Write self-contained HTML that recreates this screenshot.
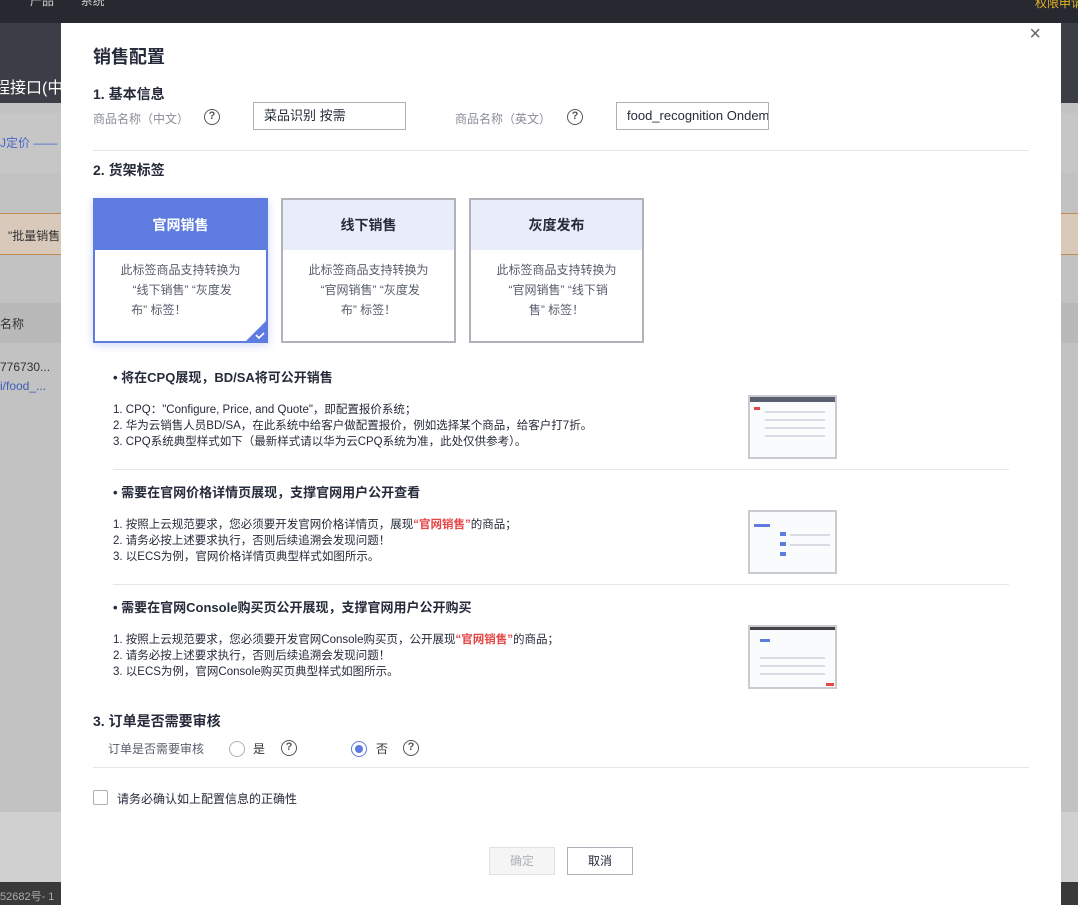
<!DOCTYPE html>
<html><head><meta charset="utf-8"><style>
*{box-sizing:border-box;margin:0;padding:0}
body{width:1078px;height:905px;overflow:hidden;position:relative;background:#c2c2c3;font-family:"Liberation Sans","Noto Sans CJK SC",sans-serif;color:#333}
.abs{position:absolute;white-space:nowrap}
.modal{position:absolute;left:61px;top:23px;width:1000px;height:882px;background:#fff}
.h1{position:absolute;left:32px;top:20px;font-size:18px;font-weight:bold;color:#252b3a}
.sec{position:absolute;left:32px;font-size:14px;font-weight:bold;color:#252b3a}
.lbl{position:absolute;font-size:12px;color:#8a8e99}
.q{position:absolute;width:16px;height:16px;border:1.5px solid #555;border-radius:50%;font-size:11px;line-height:13px;text-align:center;color:#555;font-weight:bold}
.inp{position:absolute;height:28px;border:1px solid #adb0b8;font-size:13px;line-height:26px;padding-left:10px;color:#252b3a;overflow:hidden;white-space:nowrap}
.hr{position:absolute;left:32px;width:936px;height:1px;background:#e6e6e6}
.card{position:absolute;top:175px;width:175px;height:145px;border:2px solid #b0b3ba;background:#fff}
.card .t{height:50px;background:#e9edfa;text-align:center;line-height:50px;font-size:14px;font-weight:bold;color:#252b3a}
.card .d{padding:10px 0;font-size:12px;line-height:20px;color:#575d6c;text-align:center;white-space:nowrap}
.card.on{border-color:#5e7ce0;box-shadow:0 2px 8px rgba(94,124,224,.3)}
.card.on .t{background:#5e7ce0;color:#fff}
.bt{position:absolute;left:52px;font-size:13px;font-weight:bold;color:#252b3a}
.ln{position:absolute;left:52px;font-size:11.5px;line-height:16px;color:#252b3a;white-space:nowrap}
.red{color:#e54545;font-weight:bold}
.thumb{position:absolute;left:687px;width:89px;height:64px;border:2px solid #c9cbd0;background:#fafbfd}
.thumb i{position:absolute;display:block;background:#d8dbe3;height:2px}
</style></head><body>
<div class="abs" style="left:0;top:0;width:1078px;height:23px;background:#262930"></div>
<div class="abs" style="left:30px;top:-8px;font-size:12px;color:#ccc">产品 &nbsp;&nbsp;&nbsp;&nbsp;&nbsp;&nbsp;&nbsp;系统</div>
<div class="abs" style="left:1035px;top:-6px;font-size:12px;color:#e6b422">权限申请</div>
<div class="abs" style="left:0;top:23px;width:1078px;height:80px;background:#3b3e46"></div>
<div class="abs" style="left:-6px;top:74px;font-size:16px;color:#fff">程接口(中</div>
<div class="abs" style="left:0;top:113px;width:1078px;height:60px;background:#c6c6c7"></div>
<div class="abs" style="left:0;top:134px;font-size:12px;color:#4a67c8">J定价 ——</div>
<div class="abs" style="left:0;top:213px;width:1078px;height:42px;background:#d8c9bb;border-top:1px solid #c08a50;border-bottom:1px solid #c08a50"></div>
<div class="abs" style="left:8px;top:227px;font-size:12px;color:#333">"批量销售</div>
<div class="abs" style="left:0;top:303px;width:1078px;height:40px;background:#b9b9ba"></div>
<div class="abs" style="left:0;top:315px;font-size:12px;color:#333">名称</div>
<div class="abs" style="left:0;top:360px;font-size:12px;color:#333">776730...</div>
<div class="abs" style="left:0;top:379px;font-size:12px;color:#3c5bb5">i/food_...</div>
<div class="abs" style="left:0;top:812px;width:1078px;height:70px;background:#d0d0d1"></div>
<div class="abs" style="left:0;top:882px;width:1078px;height:23px;background:#3a3a3a"></div>
<div class="abs" style="left:0;top:888px;font-size:11px;color:#aaa">52682号- 1</div>

<div class="modal">
<div class="abs" style="right:20px;top:0px;font-size:20px;color:#666">×</div>
<div class="h1">销售配置</div>
<div class="sec" style="top:61px">1. 基本信息</div>
<div class="lbl" style="left:32px;top:87px">商品名称（中文）</div>
<div class="q" style="left:143px;top:86px">?</div>
<div class="inp" style="left:192px;top:79px;width:153px">菜品识别 按需</div>
<div class="lbl" style="left:394px;top:87px">商品名称（英文）</div>
<div class="q" style="left:506px;top:86px">?</div>
<div class="inp" style="left:555px;top:79px;width:153px">food_recognition Ondemand</div>
<div class="hr" style="top:127px"></div>
<div class="sec" style="top:137px">2. 货架标签</div>
<div class="card on" style="left:32px"><div class="t">官网销售</div><div class="d">此标签商品支持转换为<br>&nbsp;“线下销售” “灰度发<br>布” 标签！&nbsp;&nbsp;&nbsp;&nbsp;&nbsp;&nbsp;&nbsp;&nbsp;&nbsp;&nbsp;&nbsp;&nbsp;&nbsp;</div>
<svg class="abs" style="right:-2px;bottom:-2px" width="24" height="24"><path d="M24 0V24H0Z" fill="#5e7ce0"/><path d="M12 16l3 3 5-5" stroke="#fff" stroke-width="1.6" fill="none"/></svg></div>
<div class="card" style="left:220px"><div class="t">线下销售</div><div class="d">此标签商品支持转换为<br>&nbsp;“官网销售” “灰度发<br>布” 标签！</div></div>
<div class="card" style="left:408px"><div class="t">灰度发布</div><div class="d">此标签商品支持转换为<br>&nbsp;“官网销售” “线下销<br>售” 标签！</div></div>

<div class="bt" style="top:344px">• 将在CPQ展现，BD/SA将可公开销售</div>
<div class="ln" style="top:379px">1. CPQ："Configure, Price, and Quote"，即配置报价系统；<br>2. 华为云销售人员BD/SA，在此系统中给客户做配置报价，例如选择某个商品，给客户打7折。<br>3. CPQ系统典型样式如下（最新样式请以华为云CPQ系统为准，此处仅供参考）。</div>
<div class="thumb" style="top:372px"><i style="left:0;top:0;width:85px;height:5px;background:#5a6070"></i><i style="left:15px;top:14px;width:60px"></i><i style="left:15px;top:22px;width:60px"></i><i style="left:15px;top:30px;width:60px"></i><i style="left:15px;top:38px;width:60px"></i><i style="left:4px;top:10px;width:6px;height:3px;background:#e54545"></i></div>
<div class="hr" style="top:446px;left:52px;width:896px"></div>
<div class="bt" style="top:459px">• 需要在官网价格详情页展现，支撑官网用户公开查看</div>
<div class="ln" style="top:494px">1. 按照上云规范要求，您必须要开发官网价格详情页，展现<span class="red">“官网销售”</span>的商品；<br>2. 请务必按上述要求执行，否则后续追溯会发现问题！<br>3. 以ECS为例，官网价格详情页典型样式如图所示。</div>
<div class="thumb" style="top:487px"><i style="left:4px;top:12px;width:16px;height:3px;background:#5e7ce0"></i><i style="left:30px;top:20px;width:6px;height:4px;background:#5e7ce0"></i><i style="left:30px;top:30px;width:6px;height:4px;background:#5e7ce0"></i><i style="left:30px;top:40px;width:6px;height:4px;background:#5e7ce0"></i><i style="left:40px;top:22px;width:40px"></i><i style="left:40px;top:32px;width:40px"></i></div>
<div class="hr" style="top:561px;left:52px;width:896px"></div>
<div class="bt" style="top:574px">• 需要在官网Console购买页公开展现，支撑官网用户公开购买</div>
<div class="ln" style="top:609px">1. 按照上云规范要求，您必须要开发官网Console购买页，公开展现<span class="red">“官网销售”</span>的商品；<br>2. 请务必按上述要求执行，否则后续追溯会发现问题！<br>3. 以ECS为例，官网Console购买页典型样式如图所示。</div>
<div class="thumb" style="top:602px"><i style="left:0;top:0;width:85px;height:3px;background:#444"></i><i style="left:10px;top:12px;width:10px;height:3px;background:#5e7ce0"></i><i style="left:10px;top:30px;width:65px"></i><i style="left:10px;top:38px;width:65px"></i><i style="left:10px;top:46px;width:65px"></i><i style="left:76px;top:56px;width:8px;height:3px;background:#e54545"></i></div>

<div class="sec" style="top:688px">3. 订单是否需要审核</div>
<div class="abs" style="left:47px;top:717px;font-size:12px;color:#575d6c">订单是否需要审核</div>
<div class="abs" style="left:168px;top:718px;width:16px;height:16px;border:1px solid #adb0b8;border-radius:50%"></div>
<div class="abs" style="left:192px;top:717px;font-size:12px">是</div>
<div class="q" style="left:220px;top:717px">?</div>
<div class="abs" style="left:290px;top:718px;width:16px;height:16px;border:1px solid #5e7ce0;border-radius:50%"><div style="margin:3px;width:8px;height:8px;border-radius:50%;background:#5e7ce0"></div></div>
<div class="abs" style="left:315px;top:717px;font-size:12px">否</div>
<div class="q" style="left:342px;top:717px">?</div>
<div class="hr" style="top:744px"></div>
<div class="abs" style="left:32px;top:767px;width:15px;height:15px;border:1px solid #adb0b8;border-radius:2px"></div>
<div class="abs" style="left:56px;top:767px;font-size:12px;color:#252b3a">请务必确认如上配置信息的正确性</div>
<div class="abs" style="left:428px;top:824px;width:66px;height:28px;border:1px solid #dfe1e6;background:#f5f5f6;color:#adb0b8;font-size:12px;text-align:center;line-height:26px">确定</div>
<div class="abs" style="left:506px;top:824px;width:66px;height:28px;border:1px solid #adb0b8;color:#252b3a;font-size:12px;text-align:center;line-height:26px">取消</div>
</div>
</body></html>
